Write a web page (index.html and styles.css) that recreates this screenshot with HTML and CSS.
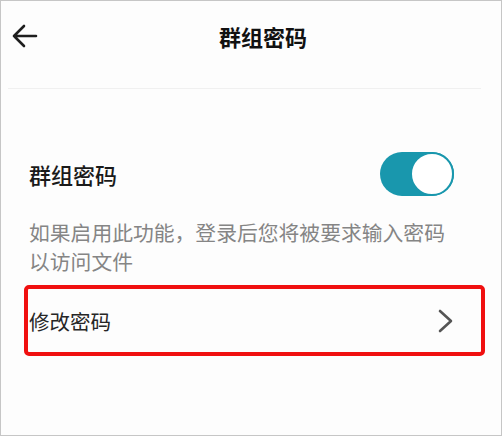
FILE: index.html
```html
<!DOCTYPE html>
<html lang="zh-CN">
<head>
<meta charset="utf-8">
<title>群组密码</title>
<link rel="stylesheet" href="styles.css">
</head>
<body>
<div class="frame">
  <header class="header">
    <svg class="back" width="26" height="24" viewBox="0 0 26 24" aria-hidden="true">
      <path d="M24 12H2M12 2L2 12L12 22" fill="none" stroke="#1e1e1e" stroke-width="2.6" stroke-linecap="round" stroke-linejoin="round"/>
    </svg>
    <h1 class="title">群组密码</h1>
  </header>
  <div class="divider"></div>
  <section class="section">
    <div class="toggle-row">
      <span class="label">群组密码</span>
      <span class="switch"><span class="knob"></span></span>
    </div>
    <p class="desc">如果启用此功能，登录后您将被要求输入密码<br>以访问文件</p>
    <div class="link-row">
      <span class="link-text">修改密码</span>
      <svg class="chev" width="16" height="24" viewBox="0 0 16 24" aria-hidden="true">
        <path d="M2 2L13 12L2 22" fill="none" stroke="#555" stroke-width="2.6" stroke-linecap="round" stroke-linejoin="round"/>
      </svg>
    </div>
  </section>
</div>
</body>
</html>
```
FILE: styles.css
```css
html, body {
  margin: 0;
  padding: 0;
  background: #ffffff;
}
body {
  font-family: "Noto Sans CJK SC", "Noto Sans", sans-serif;
}
.frame {
  box-sizing: border-box;
  width: 502px;
  height: 436px;
  border: 1px solid #c6c6c6;
  background: #fdfdfd;
  overflow: hidden;
}
.header {
  display: flex;
  align-items: center;
  height: 70px;
  padding-left: 11px;
}
.back {
  display: block;
  flex: none;
}
.title {
  margin: 0 0 0 181px;
  font-size: 22px;
  font-weight: 700;
  color: #111;
  line-height: 30px;
}
.divider {
  height: 1px;
  background: #f0f0f0;
  margin: 17px 20px 0 7px;
}
.section {
  padding-top: 63px;
}
.toggle-row {
  display: flex;
  align-items: center;
  justify-content: space-between;
  height: 44px;
  padding: 0 47px 0 28px;
}
.label {
  font-size: 22px;
  font-weight: 500;
  color: #1a1a1a;
  line-height: 30px;
}
.switch {
  box-sizing: border-box;
  width: 74px;
  height: 44px;
  border-radius: 22px;
  background: #1997ad;
  display: flex;
  justify-content: flex-end;
}
.knob {
  box-sizing: border-box;
  width: 44px;
  height: 44px;
  border-radius: 50%;
  background: #fff;
  border: 2.5px solid #1997ad;
}
.desc {
  margin: 22px 0 0 0;
  padding: 0 20px 0 28px;
  font-size: 20.8px;
  line-height: 29px;
  color: #858585;
}
.link-row {
  box-sizing: border-box;
  display: flex;
  align-items: center;
  justify-content: space-between;
  margin: 9px 0 0 23px;
  width: 461px;
  height: 71px;
  border: 4px solid #f01010;
  border-radius: 5px;
  padding: 0 27px 0 1px;
}
.link-text {
  font-size: 20.5px;
  color: #262626;
  line-height: 28px;
}
.chev {
  display: block;
}
```
